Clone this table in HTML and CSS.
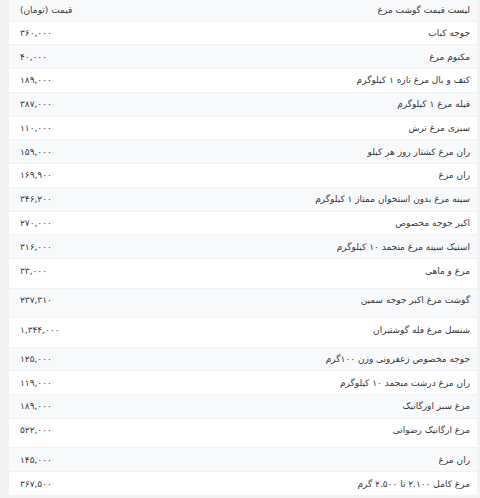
FILE: index.html
```html
<!DOCTYPE html>
<html lang="fa" dir="rtl">
<head>
<meta charset="utf-8">
<title>لیست قیمت گوشت مرغ</title>
<link rel="stylesheet" href="styles.css">
</head>
<body>
<div class="page">
<table class="prices">
<thead>
<tr><th class="name">لیست قیمت گوشت مرغ</th><th class="price">قیمت (تومان)</th></tr>
</thead>
<tbody>
<tr><td class="name">جوجه کباب</td><td class="price">۳۶۰,۰۰۰</td></tr>
<tr><td class="name">مکنوم مرغ</td><td class="price">۴۰,۰۰۰</td></tr>
<tr><td class="name">کتف و بال مرغ تازه ۱ کیلوگرم</td><td class="price">۱۸۹,۰۰۰</td></tr>
<tr><td class="name">فیله مرغ ۱ کیلوگرم</td><td class="price">۳۸۷,۰۰۰</td></tr>
<tr><td class="name">سبزی مرغ ترش</td><td class="price">۱۱۰,۰۰۰</td></tr>
<tr><td class="name">ران مرغ کشتار روز هر کیلو</td><td class="price">۱۵۹,۰۰۰</td></tr>
<tr><td class="name">ران مرغ</td><td class="price">۱۶۹,۹۰۰</td></tr>
<tr><td class="name">سینه مرغ بدون استخوان ممتاز ۱ کیلوگرم</td><td class="price">۳۴۶,۲۰۰</td></tr>
<tr><td class="name">اکبر جوجه مخصوص</td><td class="price">۲۷۰,۰۰۰</td></tr>
<tr><td class="name">استیک سینه مرغ منجمد ۱۰ کیلوگرم</td><td class="price">۳۱۶,۰۰۰</td></tr>
<tr class="tall"><td class="name">مرغ و ماهی</td><td class="price">۳۳,۰۰۰</td></tr>
<tr class="tall"><td class="name">گوشت مرغ اکبر جوجه سمین</td><td class="price">۲۳۷,۳۱۰</td></tr>
<tr class="tall"><td class="name">شنسل مرغ فله گوشتیران</td><td class="price">۱,۳۴۴,۰۰۰</td></tr>
<tr><td class="name">جوجه مخصوص زعفرونی وزن ۱۰۰گرم</td><td class="price">۱۲۵,۰۰۰</td></tr>
<tr><td class="name">ران مرغ درشت منجمد ۱۰ کیلوگرم</td><td class="price">۱۱۹,۰۰۰</td></tr>
<tr><td class="name">مرغ سبز اورگانیک</td><td class="price">۱۸۹,۰۰۰</td></tr>
<tr class="tall"><td class="name">مرغ ارگانیک رضوانی</td><td class="price">۵۲۲,۰۰۰</td></tr>
<tr><td class="name">ران مرغ</td><td class="price">۱۴۵,۰۰۰</td></tr>
<tr><td class="name">مرغ کامل ۲.۱۰۰ تا ۲.۵۰۰ گرم</td><td class="price">۳۶۷,۵۰۰</td></tr>
</tbody>
</table>
</div>
</body>
</html>
```
FILE: styles.css
```css
html, body {
  margin: 0;
  padding: 0;
  background: #f2f2f2;
}
.page {
  padding: 0 3px 0 9px;
}
.prices {
  width: 100%;
  border-collapse: collapse;
  background: #ffffff;
  font-family: "DejaVu Sans", sans-serif;
  font-size: 9px;
  color: #3a3a3a;
}
.prices th, .prices td {
  box-sizing: border-box;
  height: 23.75px;
  padding: 0 7px 0 11px;
  line-height: 10px;
  font-weight: normal;
  vertical-align: middle;
  border-top: 1px solid #f0f1f3;
}
.prices th {
  height: 21px;
  background: #f8f9fa;
  border-top: none;
}
.prices .name {
  text-align: right;
}
.prices .price {
  text-align: left;
}
.prices tbody tr:nth-child(even) {
  background: #f8f9fa;
}
.prices tr.tall td {
  height: 29.5px;
  padding-bottom: 5.5px;
}
```
